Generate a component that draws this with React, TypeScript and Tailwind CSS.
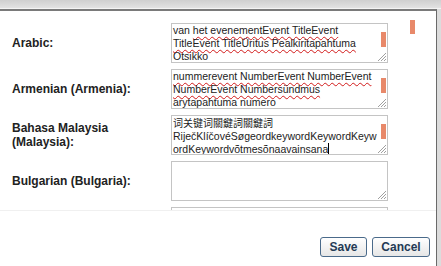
import React from "react";

type Seg = { text: string; wavy?: boolean; cjk?: boolean };
type Row = {
  label: string[];
  lines: Seg[][];
  thumb?: boolean;
  caret?: boolean;
};

const rows: Row[] = [
  {
    label: ["Arabic:"],
    lines: [
      [{ text: "van " }, { text: "het evenementEvent TitleEvent", wavy: true }],
      [{ text: "TitleEvent TitleÜritus Pealkiritapahtuma", wavy: true }],
      [{ text: "Otsikko", wavy: true }],
    ],
    thumb: true,
  },
  {
    label: ["Armenian (Armenia):"],
    lines: [
      [{ text: "nummerevent NumberEvent NumberEvent", wavy: true }],
      [{ text: "NumberEvent Numbersündmus", wavy: true }],
      [{ text: "arytapahtuma numero", wavy: true }],
    ],
    thumb: true,
  },
  {
    label: ["Bahasa Malaysia", "(Malaysia):"],
    lines: [
      [{ text: "词关键词關鍵詞關鍵詞", cjk: true }],
      [{ text: "RiječKlíčovéSøgeordkeywordKeywordKeyw" }],
      [{ text: "ordKeywordvõtmesõnaavainsana" }],
    ],
    thumb: true,
    caret: true,
  },
  { label: ["Bulgarian (Bulgaria):"], lines: [] },
];

function Grip() {
  return (
    <svg className="absolute right-0 bottom-0" width="11" height="11" viewBox="0 0 11 11">
      <path d="M10 2 L2 10 M10 5 L5 10 M10 8 L8 10" stroke="#a0a0a0" strokeWidth="1" />
    </svg>
  );
}

function Box({ row }: { row: Row }) {
  return (
    <div className="relative h-[40px] w-[217px] border border-[#c4c4c4] bg-white overflow-hidden">
      <div className="pl-[1px] font-['Liberation_Sans',Arial,sans-serif] text-[10.5px] leading-[13px] text-[#222] whitespace-nowrap">
        {row.lines.map((line, i) => (
          <div key={i}>
            {line.map((seg, j) => (
              <span
                key={j}
                className={
                  (seg.wavy ? "underline decoration-wavy decoration-[#d21a1a] decoration-1 underline-offset-2 " : "") +
                  (seg.cjk ? "font-['Noto_Sans_CJK_SC',sans-serif] text-[10px]" : "")
                }
              >
                {seg.text}
              </span>
            ))}
            {row.caret && i === row.lines.length - 1 && (
              <span className="inline-block w-[1px] h-[12px] bg-black align-[-2px]" />
            )}
          </div>
        ))}
      </div>
      {row.thumb && <div className="absolute right-[1px] top-[8px] w-[5px] h-[15px] bg-[#e8896a]" />}
      <Grip />
    </div>
  );
}

export default function App() {
  return (
    <div className="relative w-[441px] h-[266px] bg-[#dcdcdc] overflow-hidden font-['Liberation_Sans',Arial,sans-serif]">
      <div className="h-[9px] bg-gradient-to-b from-[#cfcfcf] to-[#e2e2e2] border-b border-[#f4f4f4] flex justify-between overflow-hidden">
        <div className="pl-[8px] -mt-[14px] text-[13px] font-bold text-[#333]">Translations</div>
        <div className="pr-[10px] -mt-[16px] text-[14px] text-[#555]">×</div>
      </div>
      <div className="w-[437px] h-[257px] bg-white border-t-2 border-r border-t-[#7a7a7a] border-r-[#6a6a6a] flex flex-col">
        <div className="relative h-[199px] overflow-hidden">
          <div className="pt-[12px] flex flex-col gap-[6px]">
            {rows.map((row, i) => (
              <div key={i} className="flex items-center">
                <div className="w-[171px] pl-[12px] text-[12px] leading-[14px] font-bold text-[#222]">
                  {row.label.map((l, k) => (
                    <div key={k}>{l}</div>
                  ))}
                </div>
                <Box row={row} />
              </div>
            ))}
            <div className="flex">
              <div className="w-[171px]" />
              <div className="h-[40px] w-[217px] border border-[#c4c4c4]" />
            </div>
          </div>
          <div className="absolute left-[410px] top-[9px] w-[5px] h-[14px] bg-[#e8896a]" />
        </div>
        <div className="flex-1 border-t border-[#f0f0f0] flex justify-end items-start pt-[26px] pr-[6px] gap-[5px]">
          <button className="h-[20px] w-[47px] rounded-[3px] border border-[#4a6a8a] bg-gradient-to-b from-white to-[#e6e6e6] text-[12px] font-bold text-[#243a55]">
            Save
          </button>
          <button className="h-[20px] w-[58px] rounded-[3px] border border-[#4a6a8a] bg-gradient-to-b from-white to-[#e6e6e6] text-[12px] font-bold text-[#243a55]">
            Cancel
          </button>
        </div>
      </div>
    </div>
  );
}
